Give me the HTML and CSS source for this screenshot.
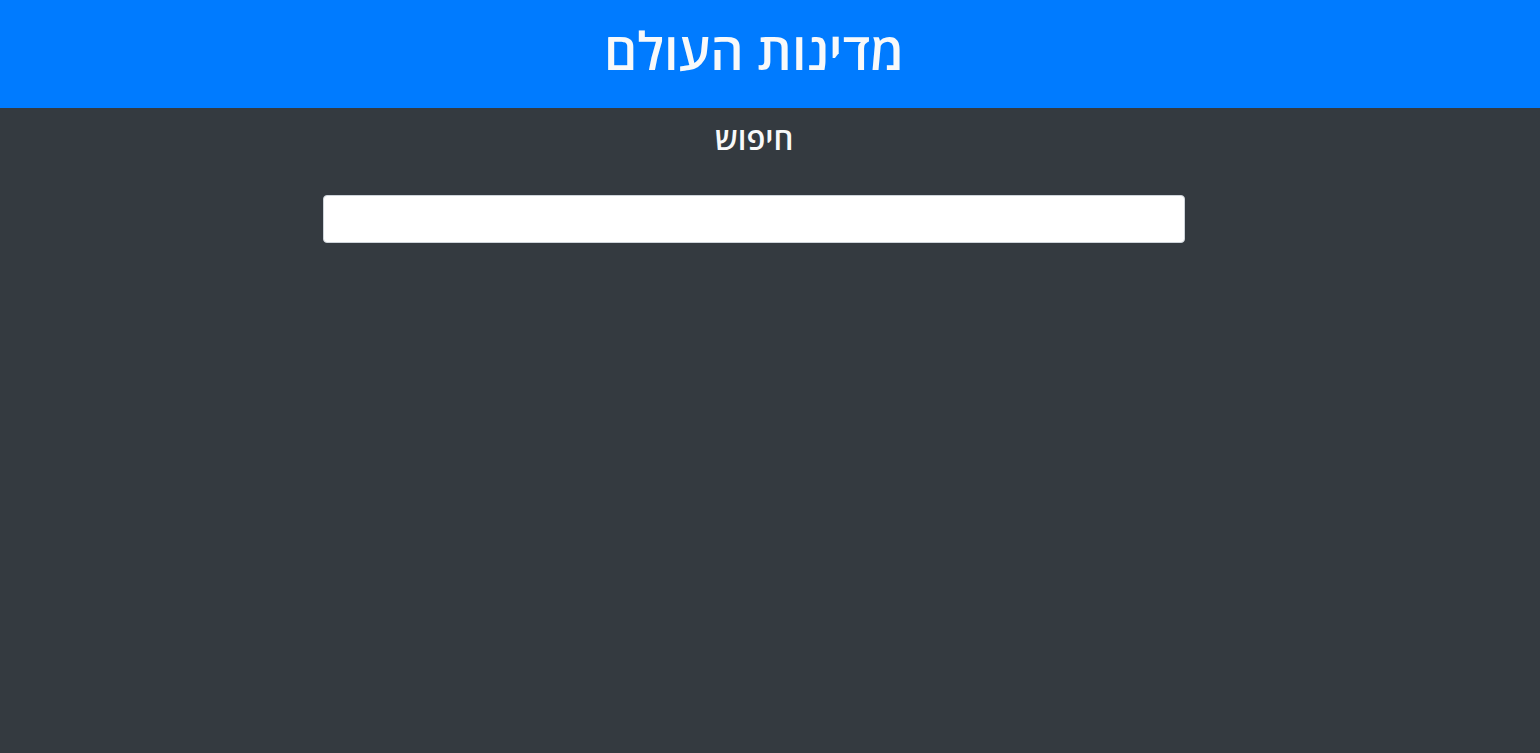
FILE: index.html
```html
<!DOCTYPE html>
<html lang="he" dir="rtl">
<head>
<meta charset="utf-8">
<title>מדינות העולם</title>
<link rel="stylesheet" href="styles.css">
</head>
<body>
<header class="top-bar">
  <h1 class="title">מדינות העולם</h1>
</header>
<main class="content">
  <label class="search-label" for="search">חיפוש</label>
  <input class="search-input" id="search" type="text">
</main>
</body>
</html>
```
FILE: styles.css
```css
html, body {
  margin: 0;
  padding: 0;
  height: 100%;
}
body {
  background: #343a40;
  font-family: "Open Sans", "DejaVu Sans", sans-serif;
  color: #f8f9fa;
}
.top-bar {
  box-sizing: border-box;
  background: #007bff;
  height: 108px;
  display: flex;
  align-items: center;
  justify-content: center;
  padding-right: 32px;
  padding-bottom: 10px;
}
.title {
  margin: 0;
  font-size: 52px;
  font-weight: 600;
  color: #f8f9fa;
}
.content {
  display: flex;
  flex-direction: column;
  align-items: center;
  padding-right: 32px;
  padding-top: 12px;
}
.search-label {
  font-size: 31px;
  font-weight: 600;
  line-height: 36px;
  margin-bottom: 39px;
}
.search-input {
  box-sizing: border-box;
  width: 862px;
  height: 48px;
  border: 1px solid #ced4da;
  border-radius: 4px;
  background: #fff;
  margin: 0;
  font-size: 16px;
}
```
